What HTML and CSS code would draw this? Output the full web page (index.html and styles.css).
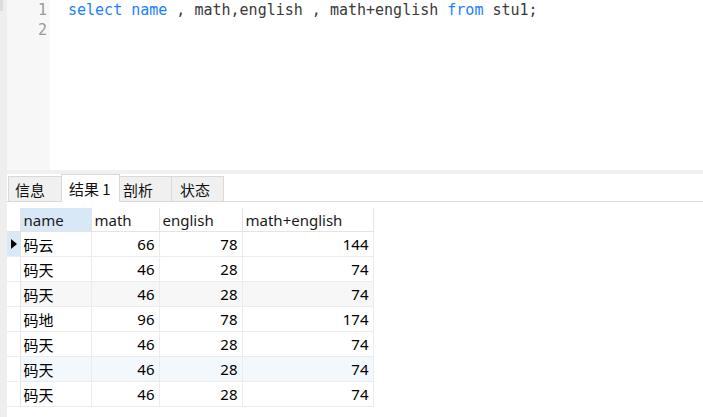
FILE: index.html
```html
<!DOCTYPE html>
<html>
<head>
<meta charset="utf-8">
<link rel="stylesheet" href="styles.css">
</head>
<body>
<div class="window">
  <div class="rail"><div class="thumb"></div></div>
  <div class="main">
    <div class="editor">
      <div class="gutter">
        <div class="ln">1</div>
        <div class="ln">2</div>
      </div>
      <div class="code">
        <div class="line"><span class="kw">select</span> <span class="kw">name</span> , math,english , math+english <span class="kw">from</span> stu1;</div>
        <div class="line"></div>
      </div>
    </div>
    <div class="splitter"></div>
    <div class="tabbar">
      <div class="tab t1">信息</div>
      <div class="tab active">结果 1</div>
      <div class="tab t3">剖析</div>
      <div class="tab t4">状态</div>
    </div>
    <div class="gridwrap">
      <table class="grid">
        <colgroup>
          <col class="c0"><col class="c1"><col class="c2"><col class="c3"><col class="c4">
        </colgroup>
        <thead>
          <tr><th class="ind"></th><th class="sel">name</th><th>math</th><th>english</th><th>math+english</th></tr>
        </thead>
        <tbody>
          <tr><td class="ind cur"><span class="tri"></span></td><td>码云</td><td class="n">66</td><td class="n">78</td><td class="n">144</td></tr>
          <tr><td class="ind"></td><td>码天</td><td class="n">46</td><td class="n">28</td><td class="n">74</td></tr>
          <tr class="alt"><td class="ind"></td><td>码天</td><td class="n">46</td><td class="n">28</td><td class="n">74</td></tr>
          <tr><td class="ind"></td><td>码地</td><td class="n">96</td><td class="n">78</td><td class="n">174</td></tr>
          <tr><td class="ind"></td><td>码天</td><td class="n">46</td><td class="n">28</td><td class="n">74</td></tr>
          <tr class="hov"><td class="ind"></td><td>码天</td><td class="n">46</td><td class="n">28</td><td class="n">74</td></tr>
          <tr><td class="ind"></td><td>码天</td><td class="n">46</td><td class="n">28</td><td class="n">74</td></tr>
        </tbody>
      </table>
    </div>
  </div>
</div>
</body>
</html>
```
FILE: styles.css
```css
html, body {
  margin: 0;
  padding: 0;
  background: #ffffff;
}
.window {
  display: flex;
  width: 703px;
  height: 417px;
  overflow: hidden;
}
.rail {
  width: 7px;
  flex: none;
  background: #eeeeee;
}
.thumb {
  width: 3px;
  height: 11px;
  background: #dcdcdc;
}
.main {
  flex: 1;
  display: flex;
  flex-direction: column;
}
.editor {
  display: flex;
  height: 170px;
  flex: none;
}
.gutter {
  width: 43px;
  background: #f7f7f7;
  flex: none;
  font-family: "DejaVu Sans Mono", monospace;
  font-size: 15px;
  color: #9a9a9a;
  text-align: right;
}
.ln {
  height: 20px;
  line-height: 20px;
  padding-right: 3px;
}
.code {
  flex: 1;
  padding-left: 18px;
  font-family: "DejaVu Sans Mono", monospace;
  font-size: 15px;
  color: #3a3a3a;
}
.line {
  height: 20px;
  line-height: 20px;
  white-space: pre;
}
.kw {
  color: #1a80ff;
}
.splitter {
  height: 4px;
  background: #f0f0f0;
  flex: none;
}
.tabbar {
  height: 28px;
  flex: none;
  display: flex;
  align-items: flex-end;
  border-bottom: 1px solid #d9d9d9;
  box-sizing: border-box;
  padding-left: 1px;
  font-family: "Noto Sans CJK SC", "Noto Sans", sans-serif;
  font-size: 15px;
  color: #111;
}
.tab {
  height: 25px;
  box-sizing: border-box;
  background: #f0f0f0;
  border: 1px solid #d9d9d9;
  border-bottom: none;
  display: flex;
  align-items: center;
  padding-left: 6px;
  margin-right: -1px;
}
.t1 { width: 54px; }
.t3 { width: 53px; padding-left: 3px; }
.t4 { width: 53px; padding-left: 8px; }
.tab.active {
  background: #ffffff;
  height: 28px;
  width: 59px;
  padding-left: 7px;
  margin-bottom: -1px;
  position: relative;
  z-index: 1;
}
.gridwrap {
  padding-top: 6px;
}
.grid {
  border-collapse: collapse;
  table-layout: fixed;
  width: 366px;
  font-family: "Noto Sans", "Noto Sans CJK SC", sans-serif;
  font-size: 15px;
  color: #000;
}
.c0 { width: 13px; }
.c1 { width: 71px; }
.c2 { width: 68px; }
.c3 { width: 83px; }
.c4 { width: 131px; }
.grid th {
  height: 23px;
  padding: 0 3px;
  text-align: left;
  font-weight: normal;
  color: #1a1a1a;
  border-right: 1px solid #e4e4e4;
  border-bottom: 1px solid #e4e4e4;
  white-space: nowrap;
}
.grid th.sel {
  background: #d9e8f7;
}
.grid td {
  height: 24px;
  padding: 0 3px;
  border: 1px solid #ececec;
  border-left: none;
  white-space: nowrap;
  font-family: "Noto Sans CJK SC", "Noto Sans", sans-serif;
}
.grid td.n {
  text-align: right;
  padding-right: 4px;
  font-family: "Noto Sans", sans-serif;
}
.grid td.ind {
  padding: 0;
  border-right: 1px solid #e4e4e4;
}
.grid td.cur {
  background: #d9e8f7;
}
.tri {
  display: block;
  width: 0;
  height: 0;
  margin-left: 4px;
  border-top: 5px solid transparent;
  border-bottom: 5px solid transparent;
  border-left: 6px solid #000;
}
.grid tr.alt td {
  background: #f7f7f7;
}
.grid tr.hov td {
  background: #f3f8fd;
}
.grid tr.alt td.ind,
.grid tr.hov td.ind {
  background: #ffffff;
}
```
